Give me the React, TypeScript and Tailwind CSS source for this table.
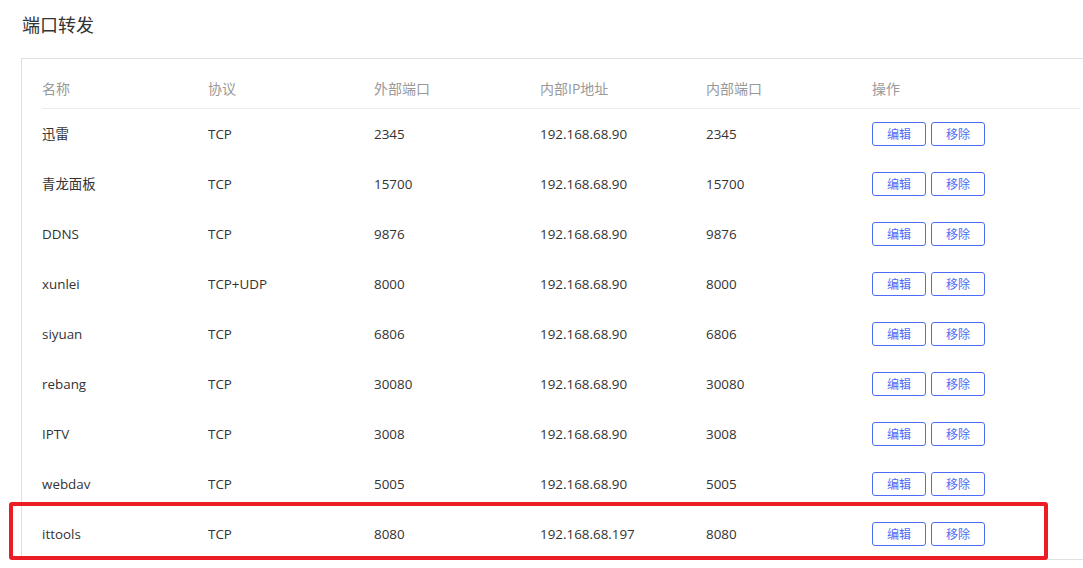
import React from 'react';

type Rule = {
  name: string;
  proto: string;
  extPort: string;
  ip: string;
  intPort: string;
};

const rules: Rule[] = [
  { name: '迅雷', proto: 'TCP', extPort: '2345', ip: '192.168.68.90', intPort: '2345' },
  { name: '青龙面板', proto: 'TCP', extPort: '15700', ip: '192.168.68.90', intPort: '15700' },
  { name: 'DDNS', proto: 'TCP', extPort: '9876', ip: '192.168.68.90', intPort: '9876' },
  { name: 'xunlei', proto: 'TCP+UDP', extPort: '8000', ip: '192.168.68.90', intPort: '8000' },
  { name: 'siyuan', proto: 'TCP', extPort: '6806', ip: '192.168.68.90', intPort: '6806' },
  { name: 'rebang', proto: 'TCP', extPort: '30080', ip: '192.168.68.90', intPort: '30080' },
  { name: 'IPTV', proto: 'TCP', extPort: '3008', ip: '192.168.68.90', intPort: '3008' },
  { name: 'webdav', proto: 'TCP', extPort: '5005', ip: '192.168.68.90', intPort: '5005' },
  { name: 'ittools', proto: 'TCP', extPort: '8080', ip: '192.168.68.197', intPort: '8080' },
];

const headers = ['名称', '协议', '外部端口', '内部IP地址', '内部端口', '操作'];

export default function App() {
  return (
    <div
      className="relative w-[1083px] h-[568px] overflow-hidden bg-white text-[#333]"
      style={{ fontFamily: '"Open Sans", "Noto Sans CJK SC", sans-serif' }}
    >
      <h1 className="pl-[22px] pt-[12px] h-[58px] text-[18px] leading-[26px] text-[#333]">端口转发</h1>

      <div className="ml-[21px] w-[1080px] border border-[#e0e0e0] px-[20px] pt-[10px]">
        <div className="grid grid-cols-[166px_166px_166px_166px_166px_1fr] h-[40px] items-center border-b border-[#ececec] text-[14px] text-[#999]">
          {headers.map((h) => (
            <div key={h}>{h}</div>
          ))}
        </div>
        {rules.map((r) => (
          <div
            key={r.name}
            className="grid grid-cols-[166px_166px_166px_166px_166px_1fr] h-[50px] items-center text-[13.4px] leading-[18px] text-[#333]"
          >
            <div className="-mt-[1px]">{r.name}</div>
            <div className="-mt-[1px]">{r.proto}</div>
            <div className="-mt-[1px]">{r.extPort}</div>
            <div className="-mt-[1px]">{r.ip}</div>
            <div className="-mt-[1px]">{r.intPort}</div>
            <div className="flex gap-[5px]">
              <button className="w-[54px] h-[24px] rounded-[3px] border border-[#4d6cf5] pt-[2px] text-[12px] text-[#4d6cf5] leading-[20px]">
                编辑
              </button>
              <button className="w-[54px] h-[24px] rounded-[3px] border border-[#4d6cf5] pt-[2px] text-[12px] text-[#4d6cf5] leading-[20px]">
                移除
              </button>
            </div>
          </div>
        ))}
      </div>

      <div className="absolute left-[9px] top-[502px] w-[1039px] h-[58px] border-[4px] border-[#ec1c24] rounded-[3px] pointer-events-none" />
    </div>
  );
}
